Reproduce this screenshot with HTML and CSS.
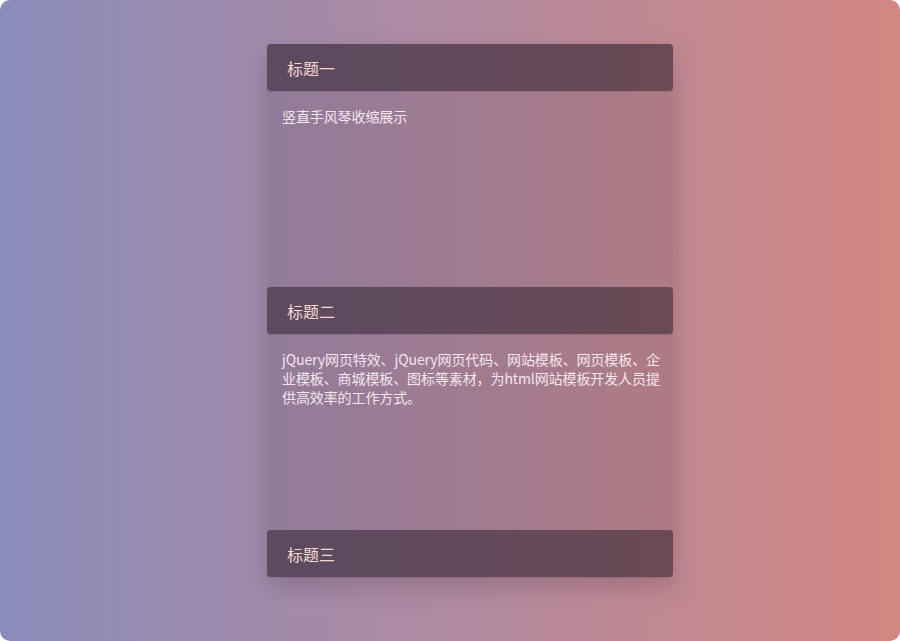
FILE: index.html
```html
<!DOCTYPE html>
<html lang="zh">
<head>
<meta charset="utf-8">
<title>竖直手风琴</title>
<link rel="stylesheet" href="styles.css">
</head>
<body>
<div class="page">
  <div class="accordion">
    <div class="item">
      <div class="head">标题一</div>
      <div class="body">竖直手风琴收缩展示</div>
    </div>
    <div class="item">
      <div class="head">标题二</div>
      <div class="body">jQuery网页特效、jQuery网页代码、网站模板、网页模板、企业模板、商城模板、图标等素材，为html网站模板开发人员提供高效率的工作方式。</div>
    </div>
    <div class="item">
      <div class="head">标题三</div>
    </div>
  </div>
</div>
</body>
</html>
```
FILE: styles.css
```css
html, body {
  margin: 0;
  padding: 0;
  background: #ffffff;
}
.page {
  width: 900px;
  height: 641px;
  border-radius: 10px;
  overflow: hidden;
  background: linear-gradient(to right, #8a8cba 0%, #b48a9e 55%, #d28782 100%);
  display: flex;
  justify-content: center;
  padding: 44px 0 0 40px;
  box-sizing: border-box;
  font-family: "Noto Sans CJK SC", "Noto Sans", sans-serif;
}
.accordion {
  width: 406px;
  height: 533px;
  display: flex;
  flex-direction: column;
  background: rgba(30, 10, 30, 0.11);
  border-radius: 4px;
  box-shadow: 0 10px 25px rgba(60, 30, 50, 0.22);
}
.head {
  height: 47px;
  box-sizing: border-box;
  padding-left: 20px;
  display: flex;
  align-items: center;
  font-size: 16px;
  color: #f3d9d2;
  background: rgba(42, 28, 42, 0.52);
  border-radius: 4px;
  box-shadow: 0 1px 2px rgba(0, 0, 0, 0.12);
}
.body {
  height: 196px;
  box-sizing: border-box;
  padding: 16px 5px 16px 15px;
  font-size: 14px;
  line-height: 19px;
  color: #f4e6ee;
  letter-spacing: -0.1px;
}
```
